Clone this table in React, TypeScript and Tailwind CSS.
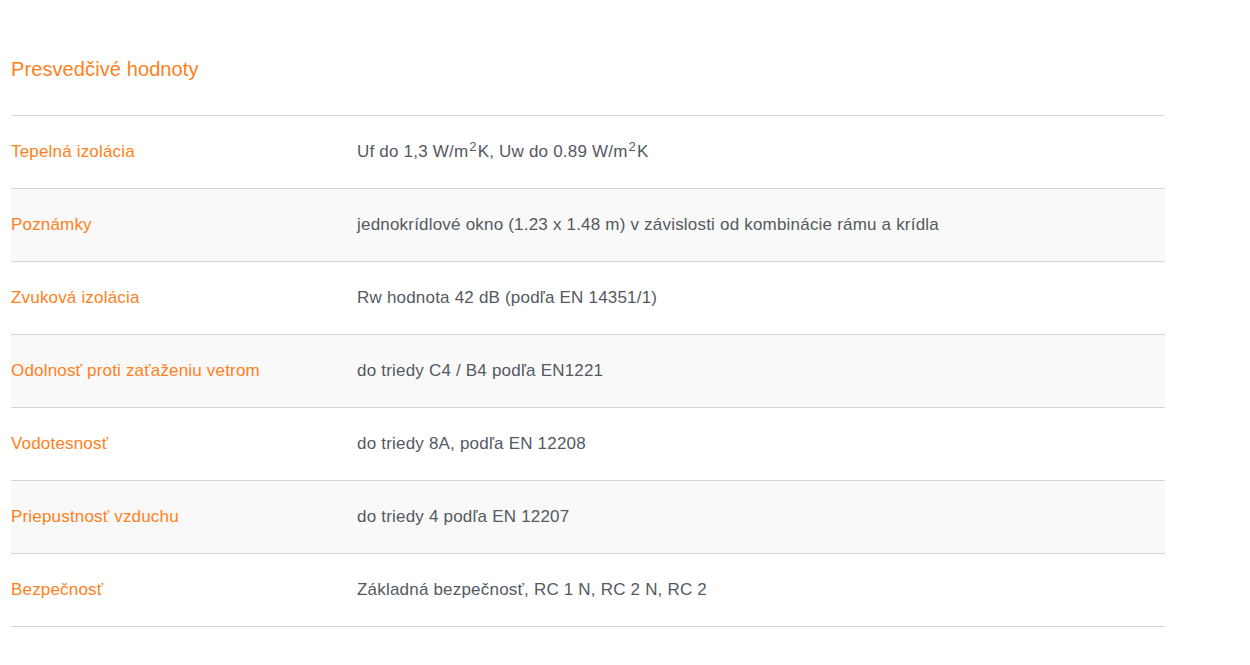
const rows: { label: string; value: React.ReactNode }[] = [
  {
    label: 'Tepelná izolácia',
    value: (
      <>
        Uf do 1,3 W/m<sup className="text-[13px] px-[1px]">2</sup>K, Uw do 0.89 W/m<sup className="text-[13px] px-[1px]">2</sup>K
      </>
    ),
  },
  { label: 'Poznámky', value: 'jednokrídlové okno (1.23 x 1.48 m) v závislosti od kombinácie rámu a krídla' },
  { label: 'Zvuková izolácia', value: 'Rw hodnota 42 dB (podľa EN 14351/1)' },
  { label: 'Odolnosť proti zaťaženiu vetrom', value: 'do triedy C4 / B4 podľa EN1221' },
  { label: 'Vodotesnosť', value: 'do triedy 8A, podľa EN 12208' },
  { label: 'Priepustnosť vzduchu', value: 'do triedy 4 podľa EN 12207' },
  { label: 'Bezpečnosť', value: 'Základná bezpečnosť, RC 1 N, RC 2 N, RC 2' },
]

export default function App() {
  return (
    <div className="min-h-screen bg-white font-['Liberation_Sans',Arial,sans-serif]">
      <div className="w-[1154px] ml-[11px] pt-[57px]">
        {/* nadpis */}
        <h2 className="text-[20px] leading-[24px] tracking-[0.1px] text-[#ff8020] mb-[34px]">Presvedčivé hodnoty</h2>

        {/* tabuľka hodnôt */}
        <div className="border-t border-[#d5d5d5]">
          {rows.map((row, i) => (
            <div
              key={row.label}
              className={`flex items-center h-[73px] border-b border-[#d5d5d5] text-[17px] tracking-[0.18px] ${
                i % 2 === 1 ? 'bg-[#f9f9f9]' : 'bg-white'
              }`}
            >
              <div className="w-[346px] shrink-0 text-[#ff8020]">{row.label}</div>
              <div className="text-[#54595f] tracking-[0.2px]">{row.value}</div>
            </div>
          ))}
        </div>
      </div>
    </div>
  )
}
